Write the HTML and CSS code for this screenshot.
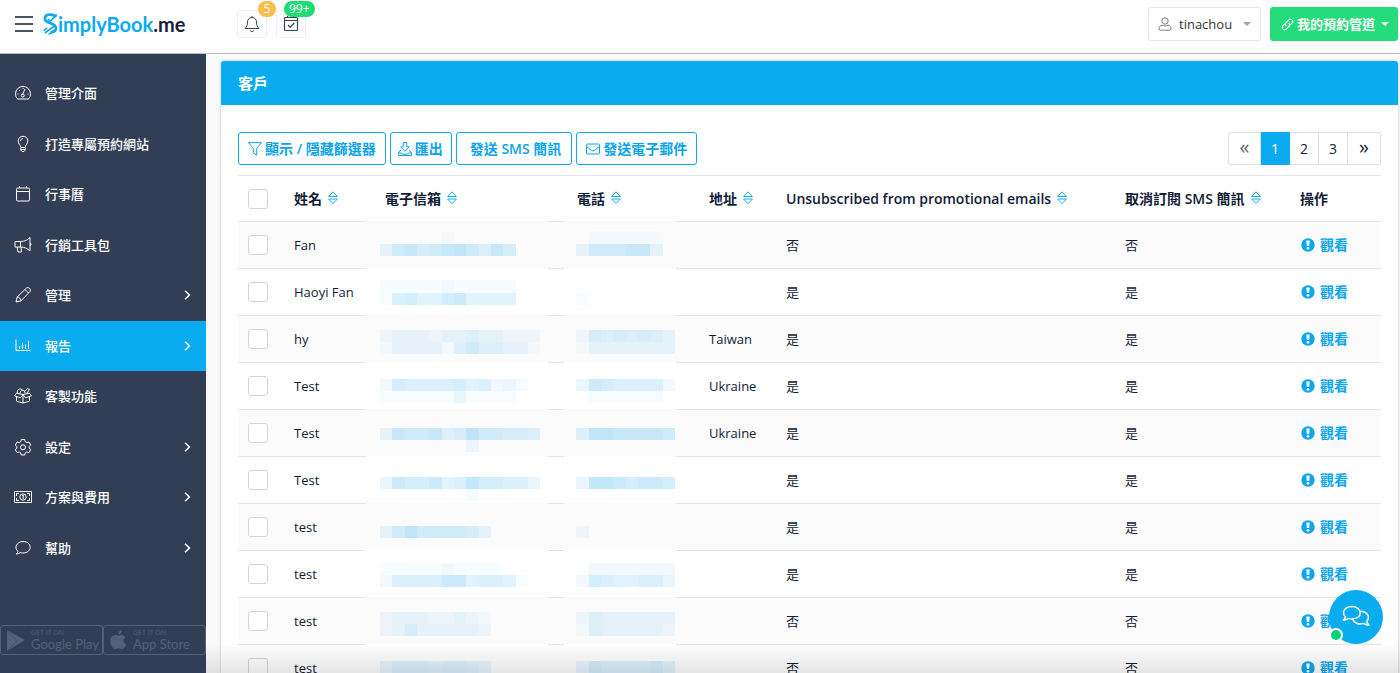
FILE: index.html
```html
<!DOCTYPE html>
<html lang="zh-Hant">
<head>
<meta charset="utf-8">
<title>SimplyBook.me</title>
<link rel="stylesheet" href="styles.css">
</head>
<body>
<svg class="defs" aria-hidden="true">
  <symbol id="sort" viewBox="0 0 10 14"><path d="M.6 5.500 5 .8l4.400 4.700zM.6 8l4.400 4.700L9.400 8z" fill="none" stroke="currentColor" stroke-linejoin="round"/></symbol>
  <symbol id="alert" viewBox="0 0 14 14"><circle cx="7" cy="7" r="6.7" fill="currentColor"/><path d="M5.300 2.600h3.400L8.200 8H5.800z" fill="#fff"/><circle cx="7" cy="10.300" r="1.400" fill="#fff"/></symbol>
  <symbol id="chev" viewBox="0 0 7 10"><path d="m1 .8 4.4 4.2L1 9.2" fill="none" stroke="currentColor" stroke-width="1.5"/></symbol>
</svg>
<div class="app">
  <header class="topbar">
    <button class="burger" aria-label="Menu"><span></span><span></span><span></span></button>
    <a class="logo" href="#">
      <svg width="15" height="24" viewBox="0 0 15 24" aria-hidden="true"><g fill="none" stroke="#0daaf0"><path d="M12.800 5.200C10.400 1.700 1.900 1.500 1.900 6.900c0 4.700 11.100 3.600 11.100 9.200 0 3.400-3.400 4.400-5.500 4.400" stroke-width="2.800"/><path d="m4.900 7 2.300 2.400 6.600-7M.6 18.500l3.700-2.600M2 21l9.400-7.200M5.600 22.500l5-4" stroke-width="1.600"/></g></svg><span class="logo-blue">implyBook</span><span class="logo-dark">.me</span>
    </a>
    <div class="notices">
      <button class="notice" aria-label="Notifications">
        <svg width="16" height="18" viewBox="0 0 16 18" fill="none" stroke="#3c4250" stroke-linejoin="round"><path d="M8 1v1.500M8 2.500c-3 0-4.500 2.200-4.500 4.500 0 3.500-.8 4.700-2.500 6.500h14c-1.700-1.800-2.500-3-2.500-6.500 0-2.300-1.500-4.500-4.500-4.500zM6 15.200c.5 1.800 3.500 1.800 4 0"/></svg>
        <span class="badge badge-orange">5</span>
      </button>
      <button class="notice" aria-label="Tasks">
        <svg width="16" height="18" viewBox="0 0 16 18" fill="none" stroke="#3c4250" stroke-width="1.200"><rect x="1.500" y="2.500" width="13" height="13" rx="1"/><path d="M1.500 5.500h13M4.500 1v2M11.500 1v2M5 10l2.200 2.200L11.300 8"/></svg>
        <span class="badge badge-green">99+</span>
      </button>
    </div>
    <button class="user">
      <svg width="14" height="14" viewBox="0 0 14 14" fill="none" stroke="#777b84"><circle cx="7" cy="4" r="3.200"/><path d="M4 8.200C2 8.200 1 10 1 12q0 1.200 1.200 1.200h9.600Q13 13.200 13 12c0-2-1-3.800-3-3.800-2 .9-4 .9-6 0z"/></svg>
      <span>tinachou</span><i class="caret"></i>
    </button>
    <button class="channel">
      <svg width="13" height="13" viewBox="0 0 13 13" fill="none" stroke="#fff" stroke-width="1.100"><path d="M5.200 7.800c-1-1-1-2.300 0-3.300l2.600-2.700c2-2 5.200 1 3.200 3.300L9 7.200"/><path d="M7.800 5.200c1 1 1 2.300 0 3.300l-2.600 2.700c-2 2-5.200-1-3.200-3.300L4 5.800"/></svg>
      <span>我的預約管道</span><i class="caret"></i>
    </button>
  </header>
  <div class="body">
    <aside class="sidebar">
      <nav class="menu">
        <a href="#"><svg class="ico" viewBox="0 0 18 18"><path d="M3.500 15A7.500 7.500 0 1 1 14.500 15zM8.500 10.500 11 5M3.500 10h1M5 6l.8.700M9 4v1M13.500 10h1"/><circle cx="8.800" cy="11.500" r="1.500"/></svg><span>管理介面</span></a>
        <a href="#"><svg class="ico" viewBox="0 0 18 18"><path d="M6.800 12.500c0-2.500-2.600-3.500-2.600-6.700 0-6 9.600-6 9.600 0 0 3.200-2.600 4.200-2.600 6.700zM6.800 12.500v2.500l1.200 1.500h2l1.200-1.500v-2.500M6.800 14.500h4.400M6.500 6c0-1.400 1-2.500 2.500-2.500"/></svg><span>打造專屬預約網站</span></a>
        <a href="#"><svg class="ico" viewBox="0 0 18 18"><rect x="2.500" y="3" width="13" height="13" rx="1.200"/><path d="M2.500 6.500h13M5.500 1v2M12.500 1v2"/></svg><span>行事曆</span></a>
        <a href="#"><svg class="ico" viewBox="0 0 18 18"><path d="M1 5.500h5.500v5.500H1zM6.500 5.500c4 0 7-1.500 9.500-4v13.500c-2.500-2.500-5.500-4-9.500-4M3 11l1 5h3.500L7 11M16 7c1.500.4 1.500 2.100 0 2.500"/></svg><span>行銷工具包</span></a>
        <a href="#"><svg class="ico" viewBox="0 0 18 18"><path d="m2 16 1.200-5L12.500 2c2-1.500 5 1.300 3.500 3.500L7 14.800zM11 3.500l3.500 3.500M3.200 11c1.800 0 3.500 1.500 3.800 3.800"/></svg><span>管理</span><svg class="chev"><use href="#chev"/></svg></a>
        <a href="#" class="active"><svg class="ico" viewBox="0 0 18 18"><path d="M2 2.500V13.500h14.500M5.500 9v3M8.500 6v6M11.500 7.500v4.500M14.500 4v8"/></svg><span>報告</span><svg class="chev"><use href="#chev"/></svg></a>
        <a href="#"><svg class="ico" viewBox="0 0 18 18"><path d="M2.500 9v5.200L9 16l6.500-1.800V9M9 7.500V16M2.500 6.200 9 7.500l6.500-1.300 2 2.600-6 2L9 7.500l-2.500 3.300-6-2zM3.500 6C2.500 2 7 .5 8.500 3.500M6 6.500c0-2.500 2-4 4-3l1.500 3M11 4l2.500-2.500 2 1L13 6"/></svg><span>客製功能</span></a>
        <a href="#"><svg class="ico" viewBox="0 0 18 18"><path d="M7.300 1.500h3.400l.6 2.200 1.500.9 2.200-.6 1.700 3L15.200 8.600v1.500l1.500 1.600-1.700 2.900-2.200-.6-1.500.9-.6 2.100H7.300l-.6-2.100-1.500-.9-2.200.6-1.700-2.900 1.500-1.600V8.600L1.300 7 3 4l2.200.6 1.500-.9z"/><circle cx="9" cy="9.300" r="2.500"/></svg><span>設定</span><svg class="chev"><use href="#chev"/></svg></a>
        <a href="#"><svg class="ico" viewBox="0 0 18 18"><rect x=".5" y="3.500" width="17" height="11"/><circle cx="9" cy="9" r="3.200"/><path d="M8 7.800 9.200 7v4M2.500 8V5.500H5M13 5.500h2.500V8M2.500 10v2.500H5M13 12.500h2.500V10"/></svg><span>方案與費用</span><svg class="chev"><use href="#chev"/></svg></a>
        <a href="#"><svg class="ico" viewBox="0 0 18 18"><path d="M4 12.500C-.5 8.500 3 2.500 9 2.500c9.500 0 9.500 11.500 0 11.500-1 0-2-.1-2.800-.4C5 14.500 3.500 15 2 15c1-.8 1.600-1.500 2-2.500z"/></svg><span>幫助</span><svg class="chev"><use href="#chev"/></svg></a>
      </nav>
      <div class="stores">
        <a class="store" href="#"><svg width="18" height="21" viewBox="0 0 18 21"><path d="M0 0 18 10 0 21z" fill="#536079"/><path d="m0 0 10 11L0 21" fill="none" stroke="#465269"/></svg><span><small>GET IT ON</small><b>Google Play</b></span></a>
        <a class="store" href="#"><svg width="17" height="20" viewBox="0 0 17 20"><path d="M12 0c.3 2-1.500 4.300-3.600 4.300C8.100 2.300 10 .3 12 0zM15.500 7.300C12.500 9 13 13 16.200 14.200 15.300 17 13.600 19 12 19s-1.800-.8-3.400-.8-2 .8-3.500.8C2.700 19 .3 14.800.3 11.200c0-5.700 4.900-7.400 8.200-5.400 2-1.200 5.200-1.200 7 1.500z" fill="#536079"/></svg><span><small>GET IT ON</small><b>App Store</b></span></a>
      </div>
    </aside>
    <main class="content">
      <section class="card">
        <h1 class="card-title">客戶</h1>
        <div class="card-body">
          <div class="toolbar">
            <button class="btn"><svg width="14" height="14" viewBox="0 0 14 14"><path d="M.5.600h13L8.700 6.500v6.800L5.300 10.800V6.500z"/></svg>顯示 / 隱藏篩選器</button>
            <button class="btn btn-tight"><svg width="14" height="14" viewBox="0 0 14 14"><path d="M5.200.5h3.600v4.300h2.500L7 9.300 2.700 4.800h2.500zM3 8.500H2L.5 11v2.500h13V11L12 8.500h-1M.5 11h3.200l1 1.200h4.600l1-1.200h3.200"/></svg>匯出</button>
            <button class="btn btn-wide">發送 SMS 簡訊</button>
            <button class="btn"><svg width="14" height="14" viewBox="0 0 14 14"><rect x=".5" y="2" width="13" height="10" rx="1"/><path d="m.5 4.500 5.200 4q1.300.9 2.600 0l5.200-4"/></svg>發送電子郵件</button>
            <nav class="pager" aria-label="分頁">
              <a class="edge off" href="#">«</a><a class="current" href="#">1</a><a href="#">2</a><a href="#">3</a><a class="edge" href="#">»</a>
            </nav>
          </div>
          <table class="clients">
            <colgroup><col class="c-check"><col class="c-name"><col class="c-mail"><col class="c-phone"><col class="c-addr"><col><col class="c-sms"><col class="c-op"></colgroup>
            <thead>
              <tr>
                <th><input type="checkbox" aria-label="全選"></th>
                <th>姓名<svg class="sort"><use href="#sort"/></svg></th>
                <th>電子信箱<svg class="sort"><use href="#sort"/></svg></th>
                <th>電話<svg class="sort"><use href="#sort"/></svg></th>
                <th>地址<svg class="sort"><use href="#sort"/></svg></th>
                <th>Unsubscribed from promotional emails<svg class="sort"><use href="#sort"/></svg></th>
                <th>取消訂閱 SMS 簡訊<svg class="sort"><use href="#sort"/></svg></th>
                <th>操作</th>
              </tr>
            </thead>
            <tbody id="rows"></tbody>
          </table>
        </div>
      </section>
    </main>
  </div>
  <button class="chat" aria-label="Chat">
    <svg width="28" height="24" viewBox="0 0 28 24" fill="none" stroke="#fff" stroke-width="1.500" stroke-linejoin="round"><path d="M3.500 12C-1 7 3 1.500 10 1.500c10.500 0 11.500 12.500 0 12.500-1.200 0-2.400-.2-3.400-.6C5 14.500 3 15.200 1.200 15.200c1.200-1 2-2 2.300-3.200z"/><path d="M18.300 6.200c7.500.2 10.200 6.300 6.300 10.300.3 1.500 1.200 2.600 2.400 3.700-2 0-4-.7-5.600-1.800-4.400 1.600-9.200.1-10.800-4.200"/></svg>
    <span class="online"></span>
  </button>
</div>
<script src="script.js"></script>
</body>
</html>
```
FILE: styles.css
```css
* { box-sizing: border-box; }
body {
  margin: 0;
  font: 13px/20px "Open Sans", "Noto Sans CJK TC", sans-serif;
  color: #111c36;
}
button { font: inherit; cursor: pointer; }
a { color: inherit; text-decoration: none; }
.defs { display: none; }
.app { position: relative; display: flex; flex-direction: column; height: 100vh; overflow: hidden; }

.topbar {
  display: flex;
  align-items: center;
  flex: none;
  height: 54px;
  padding: 0 2px 5px 15px;
  border-bottom: 1px solid #bdbdbd;
  background: #fff;
}
.burger { display: flex; flex-direction: column; gap: 5px; width: 18px; padding: 0; border: 0; background: none; }
.burger span { height: 2px; background: #4b5468; }
.logo { display: flex; align-items: center; width: 194px; margin-left: 10px; font: 700 20px/24px Lato, sans-serif; }
.logo-blue { color: #0daaf0; }
.logo-dark { color: #16203a; }
.notices { display: flex; gap: 9px; }
.notice {
  position: relative;
  display: flex;
  align-items: center;
  justify-content: center;
  width: 30px;
  height: 28px;
  padding: 0;
  border: 1px solid #ececf6;
  border-radius: 3px;
  background: #fff;
}
.badge {
  position: absolute;
  top: -10px;
  left: 20px;
  min-width: 18px;
  padding: 0 4px;
  border-radius: 9px;
  color: #fff;
  font-size: 12px;
  line-height: 16px;
}
.badge-green { left: 7px; padding: 0 5px; background: #1fdb74; }
.badge-orange { background: #fbbc50; }
.user, .channel { display: flex; align-items: center; height: 34px; border-radius: 3px; white-space: nowrap; }
.user { gap: 7px; width: 113px; margin-left: auto; padding: 0 9px; border: 1px solid #e6e8f5; background: #fff; color: #333; }
.user .caret { margin-left: auto; color: #97a2bd; }
.channel { gap: 3px; width: 128px; margin-left: 9px; padding: 0 7px 0 11px; border: 0; background: #25dc7b; color: #fff; font-weight: 700; }
.caret { border: 4px solid transparent; border-top-color: currentColor; border-bottom: 0; }
.channel .caret { margin-left: 3px; }

.body { display: flex; flex: 1; min-height: 0; }
.sidebar { display: flex; flex-direction: column; flex: none; width: 206px; padding: 14px 0 18px; background: #323e55; color: #fff; }
.menu { display: grid; grid-auto-rows: 1fr; height: 505px; }
.menu a { display: flex; align-items: center; gap: 13px; padding: 0 15px 0 14px; font-weight: 500; }
.menu .active { background: #08acef; }
.ico { width: 18px; height: 18px; fill: none; stroke: #fff; stroke-linejoin: round; }
.chev { width: 7px; height: 10px; margin-left: auto; }
.stores { display: flex; margin-top: auto; color: #536079; }
.store { display: flex; flex: 1; align-items: center; gap: 6px; height: 30px; padding-left: 6px; border: 1px solid #536079; border-radius: 3px; white-space: nowrap; }
.store span { display: flex; flex-direction: column; }
.store small { font: 7px/8px "Open Sans", sans-serif; }
.store b { font: 13px/14px Lato, sans-serif; }

.content { position: relative; flex: 1; min-width: 0; padding: 7px 2px 0 15px; background: #fafafa; }
.content::after {
  content: "";
  position: absolute;
  right: 0;
  bottom: 0;
  left: 0;
  height: 30px;
  background: linear-gradient(rgba(0, 0, 0, 0), rgba(0, 0, 0, .1));
  pointer-events: none;
}
.card { height: 100%; overflow: hidden; border-radius: 3px 3px 0 0; background: #fff; box-shadow: 0 0 3px rgba(0, 0, 0, .25); }
.card-title { margin: 0; padding: 11px 17px; background: #0aacef; color: #fff; font-size: 15px; line-height: 22px; }
.card-body { padding: 27px 17px 0; }
.toolbar { display: flex; gap: 4px; margin-bottom: 10px; }
.btn {
  display: flex;
  align-items: center;
  gap: 3px;
  height: 33px;
  padding: 0 9px;
  border: 1px solid #0aacef;
  border-radius: 3px;
  background: #fff;
  color: #0aa4ea;
  font-size: 14px;
  font-weight: 600;
  white-space: nowrap;
}
.btn svg { fill: none; stroke: currentColor; stroke-linejoin: round; }
.btn-tight { padding: 0 8px 0 7px; }
.btn-wide { padding: 0 10px 0 13px; }
.pager { display: flex; margin-left: auto; font-size: 14px; line-height: 31px; text-align: center; }
.pager a { width: 29px; border: 1px solid #dcdfe6; border-left-width: 0; }
.pager .edge { width: 33px; font-size: 20px; line-height: 28px; border-radius: 0 3px 3px 0; }
.pager .off { border-left-width: 1px; border-radius: 3px 0 0 3px; color: #5f6573; }
.pager .current { border-color: #0aacef; background: #0aacef; color: #fff; }

.clients { width: 100%; table-layout: fixed; border-spacing: 0; }
.c-check { width: 46px; }
.c-name { width: 91px; }
.c-mail { width: 192px; }
.c-phone { width: 132px; }
.c-addr { width: 77px; }
.c-sms { width: 175px; }
.c-op { width: 91px; }
.clients th, .clients td { position: relative; height: 47px; padding: 0 10px; border-top: 1px solid #e6e6e6; text-align: left; white-space: nowrap; }
.clients th { height: 46px; font-size: 14px; font-weight: 600; }
.clients tbody tr { background: #fff; }
.clients tbody tr:nth-child(odd) { background: #fbfbfb; }
.clients input { display: block; appearance: none; width: 20px; height: 20px; margin: 0; border: 1px solid #d5d5d5; border-radius: 3px; background: #fff; }
.sort { width: 10px; height: 14px; margin-left: 6px; vertical-align: -1px; color: #14adf0; }
.view { display: flex; align-items: center; gap: 4px; color: #0ba6ec; font-size: 14px; font-weight: 700; }
.view svg { width: 16px; height: 14px; }
.mask { position: absolute; top: -1px; height: 47px; }
.mask-mail { left: -9px; width: 182px; }
.mask-phone { left: -3px; width: 112px; }

.chat { position: absolute; right: 17px; bottom: 29px; display: flex; align-items: center; justify-content: center; width: 54px; height: 54px; padding: 0; border: 0; border-radius: 50%; background: #08acef; }
.online { position: absolute; bottom: 2px; left: 0; width: 14px; height: 14px; border: 2px solid #fff; border-radius: 50%; background: #0bd080; }
```
FILE: script.js
```js
// Each mask is two strips of shade digits, one digit per tile.
const clients = [
  { name: "Fan", addr: "", mail: ["000000100000", "036756786475"], phone: ["00111111", "03666773"], off: "否", y: 31 },
  { name: "Haoyi Fan", addr: "", mail: ["011111211111", "015644674444"], phone: ["", "01"], off: "是", y: 37 },
  { name: "hy", addr: "Taiwan", mail: ["02333233433222", "01333314644331"], phone: ["025454543", "013333333"], off: "是", y: 44 },
  { name: "Test", addr: "Ukraine", mail: ["0265555645231", "011111131111"], phone: ["037655552", "001111110"], off: "是", y: 50 },
  { name: "Test", addr: "Ukraine", mail: ["03766745866554", "00000000200000"], phone: ["048877776", ""], off: "是", y: 56 },
  { name: "Test", addr: "", mail: ["03766745866553", "00000000100000"], phone: ["038876776", ""], off: "是", y: 62 },
  { name: "test", addr: "", mail: ["", "0368666653"], phone: ["", "02"], off: "是", y: 32 },
  { name: "test", addr: "", mail: ["011111211110", "0255557745541"], phone: ["002222222", "026544553"], off: "是", y: 38 },
  { name: "test", addr: "", mail: ["0233322321", "0235333332"], phone: ["024333333", "014333332"], off: "否", y: 44 },
  { name: "test", addr: "", mail: ["0355545543", ""], phone: ["036555564", ""], off: "否", y: 50 }
];

const TILE = 37;

function mask(kind, strips, y, fill) {
  const mail = kind === "mail";
  const width = mail ? 546 : 336;
  const start = mail ? 5 : 0;
  let out = `<svg class="mask mask-${kind}" viewBox="0 0 ${width} 141" shape-rendering="crispEdges"><rect width="${width}" height="141" fill="${fill}"/>`;
  strips.forEach((strip, r) => {
    [...strip].forEach((d, c) => {
      if (d !== "0") {
        out += `<rect x="${start + c * TILE}" y="${y + r * TILE}" width="${TILE}" height="${TILE}" fill="#0aa0f0" fill-opacity="${d * 3}%"/>`;
      }
    });
  });
  return out + "</svg>";
}

document.getElementById("rows").innerHTML = clients.map((c, i) => {
  const fill = i % 2 ? "#ffffff" : "#fbfbfb";
  return `<tr>
    <td><input type="checkbox" aria-label="${c.name}"></td>
    <td>${c.name}</td>
    <td>${mask("mail", c.mail, c.y, fill)}</td>
    <td>${mask("phone", c.phone, c.y, fill)}</td>
    <td>${c.addr}</td>
    <td>${c.off}</td>
    <td>${c.off}</td>
    <td><a class="view" href="#"><svg><use href="#alert"/></svg>觀看</a></td>
  </tr>`;
}).join("");
```
